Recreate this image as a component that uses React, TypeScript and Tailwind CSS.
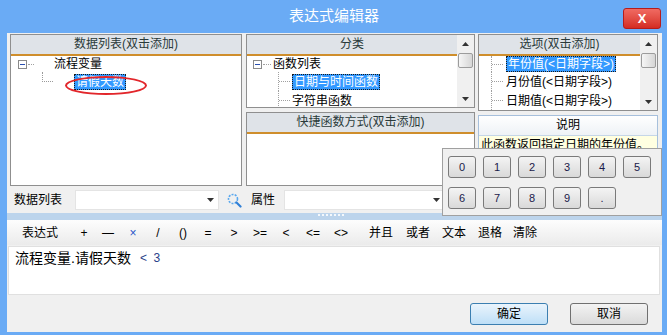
import React from "react";

const Tri = ({ dir }: { dir: "up" | "down" }) => (
  <svg width="7" height="4" viewBox="0 0 7 4">
    <path d={dir === "up" ? "M0 4 L3.5 0 L7 4Z" : "M0 0 L7 0 L3.5 4Z"} fill="#333" />
  </svg>
);

function Scrollbar() {
  return (
    <div className="w-[17px] bg-[#f0f0f0] flex flex-col items-center">
      <div className="h-[17px] w-full flex items-center justify-center">
        <Tri dir="up" />
      </div>
      <div className="mt-[1px] w-[15px] h-[15px] border border-[#9c9c9c] rounded-[2px] bg-gradient-to-r from-[#f6f6f6] to-[#d6d6d6]" />
      <div className="flex-1" />
      <div className="h-[17px] w-full flex items-center justify-center">
        <Tri dir="down" />
      </div>
    </div>
  );
}

function Header({ children }: { children: React.ReactNode }) {
  return (
    <div className="h-[21px] bg-[#dfe3e8] border-b-2 border-[#cf8e2c] text-center text-[12px] leading-[19px] text-[#2a3a3a] whitespace-nowrap">
      {children}
    </div>
  );
}

const Minus = () => (
  <span className="w-[9px] h-[9px] border border-[#8a8a8a] bg-white flex items-center justify-center">
    <span className="w-[5px] h-[1px] bg-[#2a4fb0]" />
  </span>
);

const Hl = ({ children }: { children: React.ReactNode }) => (
  <span className="bg-[#3399ff] text-white border border-dotted border-[#1a1a1a] px-[1px] leading-[14px] h-[16px] whitespace-nowrap">
    {children}
  </span>
);

function ChildRow({ ml, children, h }: { ml: string; children: React.ReactNode; h: string }) {
  return (
    <div className={`flex items-center ${h}`}>
      <div className={`${ml} h-full w-[12px] border-l border-dotted border-[#a0a0a0] flex items-center`}>
        <div className="w-full border-t border-dotted border-[#a0a0a0]" />
      </div>
      <div className="ml-[3px] flex items-center whitespace-nowrap">{children}</div>
    </div>
  );
}

function NumBtn({ label }: { label: string }) {
  return (
    <div className="w-[28px] h-[22px] border border-[#7a7a7a] rounded-[3px] bg-gradient-to-b from-[#f4f4f4] to-[#d9d9d9] flex items-center justify-center text-[11px] text-[#1a1a4a]">
      {label}
    </div>
  );
}

export default function App() {
  const font = "font-['Liberation_Sans','Noto_Sans_CJK_SC',sans-serif]";
  const op = "shrink-0 w-[24px] text-center whitespace-nowrap";
  return (
    <div className={`w-[667px] h-[335px] bg-[#6aabf5] flex flex-col ${font} text-[12px] text-black overflow-hidden`}>
      {/* title bar */}
      <div className="h-[33px] flex items-start">
        <div className="w-[45px]" />
        <div className="flex-1 text-center text-white text-[15px] leading-[18px] pt-[7px]">表达式编辑器</div>
        <div className="mt-[8px] mr-[6px] w-[38px] h-[21px] rounded-[3px] border border-[#b51c1c] bg-gradient-to-b from-[#f06a62] to-[#d42a22] flex items-center justify-center text-white font-bold text-[13px]">
          X
        </div>
      </div>

      {/* body */}
      <div className="relative ml-[7px] mr-[5px] mb-[3px] flex-1 bg-[#f0f0f0] flex flex-col">
        <div className="mt-[1px] flex h-[152px] pl-[3px]">
          {/* left panel */}
          <div className="relative w-[232px] h-full border border-[#8f8f8f] bg-white">
            <Header>数据列表(双击添加)</Header>
            <div className="pl-[7px]">
              <div className="flex items-center h-[16px]">
                <Minus />
                <span className="ml-[1px] w-[6px] border-t border-dotted border-[#a0a0a0]" />
                <span className="ml-[20px] leading-[16px]">流程变量</span>
              </div>
              <div className="flex h-[19px] items-center">
                <span className="ml-[24px] self-start w-[11px] h-[10px] border-l border-b border-dotted border-[#9a9a9a]" />
                <span className="ml-[21px]">
                  <Hl>请假天数</Hl>
                </span>
              </div>
            </div>
            <div className="absolute left-[54px] top-[41px] w-[82px] h-[19px] border-2 border-[#e2262b] rounded-[50%]" />
          </div>

          {/* middle column */}
          <div className="ml-[4px] w-[229px] h-full flex flex-col">
            <div className="h-[74px] border border-[#8f8f8f] bg-white flex">
              <div className="flex-1 overflow-hidden">
                <Header>分类</Header>
                <div className="pl-[6px]">
                  <div className="flex items-center h-[16px]">
                    <Minus />
                    <span className="ml-[1px] w-[8px] border-t border-dotted border-[#a0a0a0]" />
                    <span className="ml-[2px] leading-[16px]">函数列表</span>
                  </div>
                  <ChildRow ml="ml-[25px]" h="h-[19px]">
                    <span className="-ml-[1px]"><Hl>日期与时间函数</Hl></span>
                  </ChildRow>
                  <ChildRow ml="ml-[25px]" h="h-[19px]">
                    <span className="-ml-[1px]">字符串函数</span>
                  </ChildRow>
                </div>
              </div>
              <Scrollbar />
            </div>
            <div className="mt-[4px] h-[74px] border border-[#8f8f8f] bg-white">
              <Header>快捷函数方式(双击添加)</Header>
            </div>
          </div>

          {/* right column */}
          <div className="ml-[3px] w-[180px] h-full flex flex-col">
            <div className="h-[77px] border border-[#8f8f8f] bg-white flex">
              <div className="flex-1 overflow-hidden">
                <Header>选项(双击添加)</Header>
                <div>
                  <ChildRow ml="ml-[12px]" h="h-[16px]">
                    <Hl>年份值(&lt;日期字段&gt;)</Hl>
                  </ChildRow>
                  <ChildRow ml="ml-[12px]" h="h-[19px]">
                    <span>月份值(&lt;日期字段&gt;)</span>
                  </ChildRow>
                  <ChildRow ml="ml-[12px]" h="h-[19px]">
                    <span>日期值(&lt;日期字段&gt;)</span>
                  </ChildRow>
                </div>
              </div>
              <Scrollbar />
            </div>
            <div className="mt-[4px] h-[71px] border border-[#a7c0dc] bg-[#ffffe1] flex flex-col">
              <div className="h-[20px] bg-gradient-to-b from-white to-[#eef2f6] border-b border-[#c5d6e8] text-center leading-[19px] text-[12px]">
                说明
              </div>
              <div className="pl-[2px] pt-[1px] leading-[16px] whitespace-nowrap overflow-hidden">此函数返回指定日期的年份值。</div>
            </div>
          </div>
        </div>

        {/* combo row */}
        <div className="mt-[2px] h-[24px] flex items-center">
          <span className="ml-[7px] leading-[16px] whitespace-nowrap">数据列表</span>
          <div className="ml-[13px] w-[144px] h-[20px] bg-white border border-[#e4e4e4] flex items-center justify-end pr-[4px]">
            <Tri dir="down" />
          </div>
          <svg className="ml-[8px]" width="15" height="15" viewBox="0 0 15 15">
            <circle cx="6" cy="6" r="4.5" fill="none" stroke="#5aa8ee" strokeWidth="1.6" strokeDasharray="2 1.2" />
            <line x1="9.5" y1="9.5" x2="13.5" y2="13.5" stroke="#2f7fd6" strokeWidth="2.2" strokeLinecap="round" />
          </svg>
          <span className="ml-[9px] leading-[16px] whitespace-nowrap">属性</span>
          <div className="ml-[9px] w-[161px] h-[20px] bg-white border border-[#e4e4e4] flex items-center justify-end pr-[4px]">
            <Tri dir="down" />
          </div>
        </div>

        {/* splitter */}
        <div className="mt-[1px] h-[7px] bg-[#bcd4ec] flex items-start">
          <span className="ml-[311px] mt-[1px] w-[26px] border-t-2 border-dotted border-[#f4f8fc]" />
        </div>

        {/* toolbar */}
        <div className="h-[25px] bg-gradient-to-b from-[#fdfdfd] to-[#ebebeb] flex items-center text-[12px]">
          <span className="ml-[15px] shrink-0 w-[36px] text-center whitespace-nowrap">表达式</span>
          <span className={`ml-[14px] ${op}`}>+</span>
          <span className={op}>—</span>
          <span className={`ml-[1px] ${op} text-[#2a56c8]`}>×</span>
          <span className={`ml-[1px] ${op}`}>/</span>
          <span className={`ml-[1px] ${op}`}>()</span>
          <span className={`ml-[1px] ${op}`}>=</span>
          <span className={`ml-[2px] ${op}`}>&gt;</span>
          <span className={`ml-[2px] ${op}`}>&gt;=</span>
          <span className={`ml-[2px] ${op}`}>&lt;</span>
          <span className={`ml-[3px] ${op}`}>&lt;=</span>
          <span className={`ml-[4px] ${op}`}>&lt;&gt;</span>
          <span className={`ml-[16px] ${op}`}>并且</span>
          <span className={`ml-[13px] ${op}`}>或者</span>
          <span className={`ml-[12px] ${op}`}>文本</span>
          <span className={`ml-[12px] ${op}`}>退格</span>
          <span className={`ml-[11px] ${op}`}>清除</span>
        </div>

        {/* expression area */}
        <div className="mt-[1px] ml-[1px] mr-[2px] h-[49px] bg-white border border-[#e0e0e0] pl-[6px] pt-[2px] text-[14px] leading-[18px] flex items-start">
          <span className="whitespace-nowrap">流程变量.请假天数</span>
          <span className="ml-[9px] text-[12px] text-[#2a3f8a] whitespace-pre leading-[18px]">&lt;  3</span>
        </div>

        {/* buttons */}
        <div className="mt-[8px] h-[22px] flex justify-end pr-[14px] gap-[22px]">
          <div className="w-[78px] h-[22px] rounded-[3px] border border-[#3c7fb1] bg-gradient-to-b from-[#eaf4fc] to-[#bedff7] flex items-center justify-center">
            确定
          </div>
          <div className="w-[78px] h-[22px] rounded-[3px] border border-[#707070] bg-gradient-to-b from-[#f3f3f3] to-[#dadada] flex items-center justify-center">
            取消
          </div>
        </div>

        {/* number pad popup */}
        <div className="absolute left-[435px] top-[115px] w-[220px] h-[68px] border border-[#a0a0a0] bg-[#f0f0f0] pl-[5px] pt-[7px]">
          <div className="grid grid-cols-[repeat(6,28px)] gap-x-[7px] gap-y-[9px]">
            {["0", "1", "2", "3", "4", "5", "6", "7", "8", "9", "."].map((n) => (
              <NumBtn key={n} label={n} />
            ))}
          </div>
        </div>
      </div>
    </div>
  );
}
